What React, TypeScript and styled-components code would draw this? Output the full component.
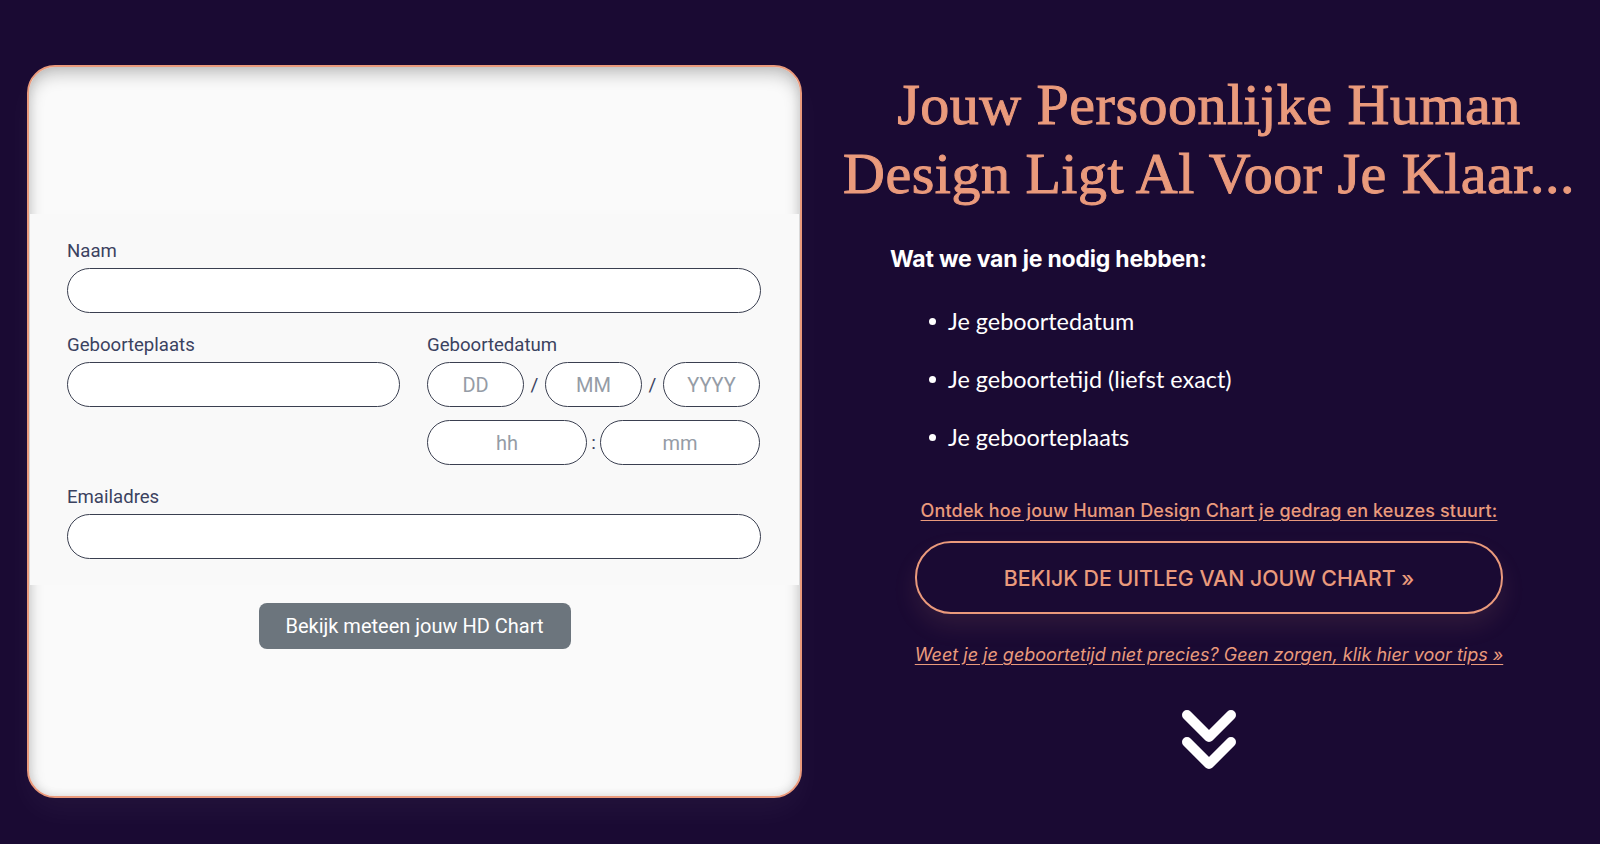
import React from 'react'
import styled, { createGlobalStyle } from 'styled-components'

const salmon = '#ea9a7c'

const GlobalStyle = createGlobalStyle`
  html, body {
    margin: 0;
    padding: 0;
    background: #1a0a33;
  }
  body {
    min-height: 844px;
    overflow: hidden;
  }
  * {
    box-sizing: border-box;
  }
`

export default function App () {
  return (
    <>
      <GlobalStyle />
      <Page>
        <Card>
          <FormPanel>
            <Field>
              <Label htmlFor='naam'>Naam</Label>
              <Input id='naam' />
            </Field>
            <Columns>
              <Field>
                <Label htmlFor='plaats'>Geboorteplaats</Label>
                <Input id='plaats' />
              </Field>
              <Field>
                <Label htmlFor='dd'>Geboortedatum</Label>
                <DateRow>
                  <Input id='dd' placeholder='DD' />
                  <Separator>/</Separator>
                  <Input placeholder='MM' />
                  <Separator>/</Separator>
                  <Input placeholder='YYYY' />
                </DateRow>
                <TimeRow>
                  <Input placeholder='hh' />
                  <Separator>:</Separator>
                  <Input placeholder='mm' />
                </TimeRow>
              </Field>
            </Columns>
            <Field>
              <Label htmlFor='email'>Emailadres</Label>
              <Input id='email' type='email' />
            </Field>
          </FormPanel>
          <SubmitButton type='button'>Bekijk meteen jouw HD Chart</SubmitButton>
        </Card>

        <Info>
          <Heading>
            Jouw Persoonlijke Human<br />
            Design Ligt Al Voor Je Klaar...
          </Heading>
          <Needs>
            <NeedsTitle>Wat we van je nodig hebben:</NeedsTitle>
            <NeedsList>
              <NeedsItem>Je geboortedatum</NeedsItem>
              <NeedsItem>Je geboortetijd (liefst exact)</NeedsItem>
              <NeedsItem>Je geboorteplaats</NeedsItem>
            </NeedsList>
          </Needs>
          <DiscoverLink href='#'>Ontdek hoe jouw Human Design Chart je gedrag en keuzes stuurt:</DiscoverLink>
          <OutlineButton href='#'>BEKIJK DE UITLEG VAN JOUW CHART »</OutlineButton>
          <TipsLink href='#'>Weet je je geboortetijd niet precies? Geen zorgen, klik hier voor tips »</TipsLink>
          <ScrollDown width='56' height='62' viewBox='0 0 56 62' aria-hidden='true'>
            <path d='M6 6 L28 28 L50 6' />
            <path d='M6 33 L28 55 L50 33' />
          </ScrollDown>
        </Info>
      </Page>
    </>
  )
}

const Page = styled.div`
  display: flex;
  align-items: flex-start;
  gap: 16px;
  padding: 65px 0 0 27px;
  width: 1600px;
  height: 844px;
`

const Card = styled.div`
  flex: none;
  width: 775px;
  height: 733px;
  display: flex;
  flex-direction: column;
  align-items: center;
  padding-top: 147px;
  border: 2px solid ${salmon};
  border-radius: 28px;
  background: #fafafa;
  box-shadow:
    inset 0 8px 16px rgba(0, 0, 0, 0.2),
    inset 0 0 10px rgba(0, 0, 0, 0.1),
    0 14px 30px rgba(255, 255, 255, 0.04);
`

const FormPanel = styled.div`
  align-self: stretch;
  margin: 0 1px;
  padding: 27px 38px 26px 37px;
  background: #f9f9f9;
  display: flex;
  flex-direction: column;
  gap: 22px;
`

const Field = styled.div`
  display: flex;
  flex-direction: column;
  min-width: 0;
`

const Label = styled.label`
  font-family: Roboto, "Liberation Sans", sans-serif;
  font-size: 18.6px;
  line-height: 20px;
  color: #3b4260;
  margin-bottom: 7px;
`

const Input = styled.input`
  width: 100%;
  min-width: 0;
  height: 45px;
  padding: 0 12px;
  border: 1px solid #3a3f50;
  border-radius: 23px;
  background: #fff;
  font-family: Roboto, "Liberation Sans", sans-serif;
  font-size: 20px;
  color: #333;
  text-align: center;
  outline: none;

  &::placeholder {
    color: #959ca6;
  }
`

const Columns = styled.div`
  display: grid;
  grid-template-columns: 333px 333px;
  column-gap: 27px;
`

const DateRow = styled.div`
  display: grid;
  grid-template-columns: 97px 21px 97px 21px 97px;
  align-items: center;
`

const TimeRow = styled.div`
  display: grid;
  grid-template-columns: 160px 13px 160px;
  align-items: center;
  margin-top: 13px;
`

const Separator = styled.span`
  font-family: Roboto, "Liberation Sans", sans-serif;
  font-size: 19px;
  color: #3b4260;
  text-align: center;
`

const SubmitButton = styled.button`
  margin-top: 18px;
  width: 312px;
  height: 46px;
  border: none;
  border-radius: 8px;
  background: #6c757d;
  color: #fff;
  font-family: Roboto, "Liberation Sans", sans-serif;
  font-size: 20px;
  cursor: pointer;
`

const Info = styled.div`
  flex: 1;
  display: flex;
  flex-direction: column;
  align-items: center;
`

const Heading = styled.h1`
  margin: 5px 0 0;
  font-family: "Liberation Serif", "DejaVu Serif", serif;
  font-weight: 400;
  font-size: 58px;
  line-height: 69px;
  letter-spacing: 0.5px;
  color: ${salmon};
  -webkit-text-stroke: 1px ${salmon};
  text-align: center;
  white-space: nowrap;
`

const Needs = styled.div`
  align-self: stretch;
  padding-left: 72px;
  margin-top: 36px;
`

const NeedsTitle = styled.div`
  font-family: Inter, "Noto Sans", sans-serif;
  font-weight: 700;
  font-size: 23px;
  line-height: 30px;
  letter-spacing: -0.2px;
  color: #fff;
`

const NeedsList = styled.ul`
  list-style: none;
  margin: 32px 0 0;
  padding: 0 0 0 39px;
  display: flex;
  flex-direction: column;
  gap: 28px;
`

const NeedsItem = styled.li`
  display: flex;
  align-items: center;
  font-family: Lato, "Noto Sans", sans-serif;
  font-size: 23.4px;
  line-height: 30px;
  color: #fff;

  &::before {
    content: '';
    width: 7px;
    height: 7px;
    border-radius: 50%;
    background: #fff;
    margin-right: 12px;
  }
`

const DiscoverLink = styled.a`
  margin-top: 47px;
  font-family: Inter, "Noto Sans", sans-serif;
  font-weight: 500;
  font-size: 18px;
  line-height: 24px;
  letter-spacing: 0.15px;
  color: ${salmon};
  text-decoration: underline;
  text-underline-offset: 3px;
`

const OutlineButton = styled.a`
  margin-top: 18px;
  width: 588px;
  height: 73px;
  display: flex;
  align-items: center;
  justify-content: center;
  border: 2px solid ${salmon};
  border-radius: 36px;
  box-shadow: 0 12px 24px rgba(234, 154, 124, 0.1);
  font-family: Inter, "Noto Sans", sans-serif;
  font-weight: 500;
  font-size: 21.3px;
  color: ${salmon};
  text-decoration: none;
`

const TipsLink = styled.a`
  margin-top: 29px;
  font-family: Inter, "Noto Sans", sans-serif;
  font-style: italic;
  font-size: 18px;
  line-height: 24px;
  color: ${salmon};
  text-decoration: underline;
  text-underline-offset: 3px;
`

const ScrollDown = styled.svg`
  margin-top: 42px;
  fill: none;
  stroke: #fff;
  stroke-width: 10;
  stroke-linecap: round;
  stroke-linejoin: round;
`
